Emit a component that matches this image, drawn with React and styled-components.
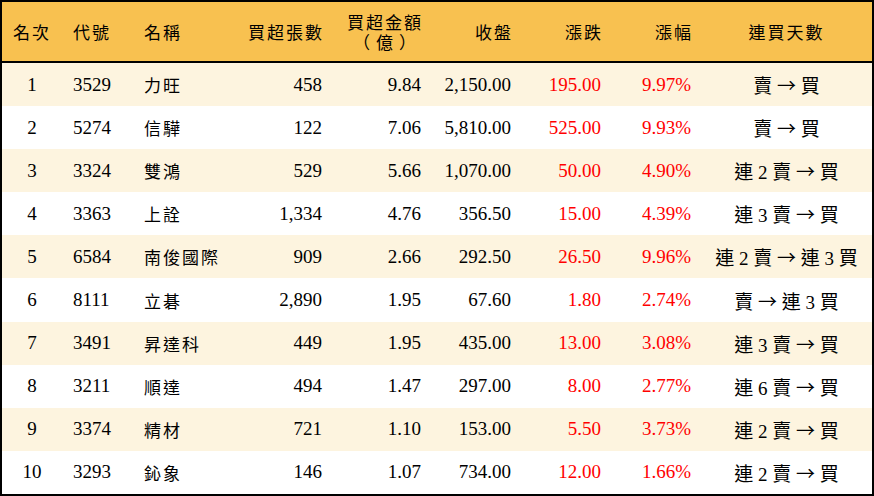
import React from "react";
import styled, { createGlobalStyle } from "styled-components";

const Global = createGlobalStyle`
  html, body { margin: 0; padding: 0; background: #fff; }
  body {
    font-family: "Liberation Serif", "Noto Sans CJK TC", serif;
    color: #000;
  }
`;

const COLS = "60px 72px 98px 100px 99px 90px 90px 90px 1fr";

const Table = styled.div`
  width: 874px;
  height: 496px;
  box-sizing: border-box;
  border: 2px solid #000;
  display: flex;
  flex-direction: column;
  background: #fff;
`;

const HeaderRow = styled.div`
  display: grid;
  grid-template-columns: ${COLS};
  height: 59px;
  background: #f8c150;
  border-bottom: 2px solid #000;
  font-family: "Noto Sans CJK TC", sans-serif;
  font-size: 17px;
  line-height: 20px;
`;

const Row = styled.div`
  display: grid;
  grid-template-columns: ${COLS};
  height: 43.1px;
  background: ${(p) => (p.$alt ? "#fdf4df" : "#ffffff")};
  font-size: 19px;
`;

const Cell = styled.div`
  display: flex;
  flex-direction: column;
  justify-content: center;
  align-items: ${(p) =>
    p.$align === "left" ? "flex-start" : p.$align === "right" ? "flex-end" : "center"};
  text-align: ${(p) => p.$align || "center"};
  padding-left: ${(p) => (p.$align === "left" ? p.$pl || 0 : 0)}px;
  padding-right: ${(p) => (p.$align === "right" ? 10 : 0)}px;
  color: ${(p) => (p.$red ? "#ff0000" : "#000")};
  white-space: nowrap;
`;

const HeadText = styled.span`
  display: block;
  letter-spacing: ${(p) => (p.$wide ? 6 : 2)}px;
  margin-right: ${(p) => (p.$trim ? (p.$wide ? -1 : -2) : 0)}px;
`;

const Name = styled.span`
  font-family: "Noto Sans CJK TC", sans-serif;
  font-size: 17px;
  letter-spacing: 2px;
`;

const Arrow = styled.span`
  font-family: "Noto Sans CJK TC", sans-serif;
  font-size: 19px;
`;

const rows = [
  ["1", "3529", "力旺", "458", "9.84", "2,150.00", "195.00", "9.97%", "賣 → 買"],
  ["2", "5274", "信驊", "122", "7.06", "5,810.00", "525.00", "9.93%", "賣 → 買"],
  ["3", "3324", "雙鴻", "529", "5.66", "1,070.00", "50.00", "4.90%", "連 2 賣 → 買"],
  ["4", "3363", "上詮", "1,334", "4.76", "356.50", "15.00", "4.39%", "連 3 賣 → 買"],
  ["5", "6584", "南俊國際", "909", "2.66", "292.50", "26.50", "9.96%", "連 2 賣 → 連 3 買"],
  ["6", "8111", "立碁", "2,890", "1.95", "67.60", "1.80", "2.74%", "賣 → 連 3 買"],
  ["7", "3491", "昇達科", "449", "1.95", "435.00", "13.00", "3.08%", "連 3 賣 → 買"],
  ["8", "3211", "順達", "494", "1.47", "297.00", "8.00", "2.77%", "連 6 賣 → 買"],
  ["9", "3374", "精材", "721", "1.10", "153.00", "5.50", "3.73%", "連 2 賣 → 買"],
  ["10", "3293", "鈊象", "146", "1.07", "734.00", "12.00", "1.66%", "連 2 賣 → 買"],
];

function Streak({ text }) {
  const [from, to] = text.split(" → ");
  return (
    <span>
      {from} <Arrow>→</Arrow> {to}
    </span>
  );
}

export default function App() {
  return (
    <>
      <Global />
      <Table>
        <HeaderRow>
          <Cell><HeadText>名次</HeadText></Cell>
          <Cell $align="left" $pl={11}><HeadText>代號</HeadText></Cell>
          <Cell $align="left" $pl={10}><HeadText>名稱</HeadText></Cell>
          <Cell $align="right"><HeadText $trim>買超張數</HeadText></Cell>
          <Cell $align="right">
            <HeadText $trim>買超金額</HeadText>
            <HeadText $trim $wide>（億）</HeadText>
          </Cell>
          <Cell $align="right"><HeadText $trim>收盤</HeadText></Cell>
          <Cell $align="right"><HeadText $trim>漲跌</HeadText></Cell>
          <Cell $align="right"><HeadText $trim>漲幅</HeadText></Cell>
          <Cell><HeadText>連買天數</HeadText></Cell>
        </HeaderRow>
        {rows.map((r, i) => (
          <Row key={r[0]} $alt={i % 2 === 0}>
            <Cell>{r[0]}</Cell>
            <Cell $align="left" $pl={11}>{r[1]}</Cell>
            <Cell $align="left" $pl={10}><Name>{r[2]}</Name></Cell>
            <Cell $align="right">{r[3]}</Cell>
            <Cell $align="right">{r[4]}</Cell>
            <Cell $align="right">{r[5]}</Cell>
            <Cell $align="right" $red>{r[6]}</Cell>
            <Cell $align="right" $red>{r[7]}</Cell>
            <Cell><Streak text={r[8]} /></Cell>
          </Row>
        ))}
      </Table>
    </>
  );
}
